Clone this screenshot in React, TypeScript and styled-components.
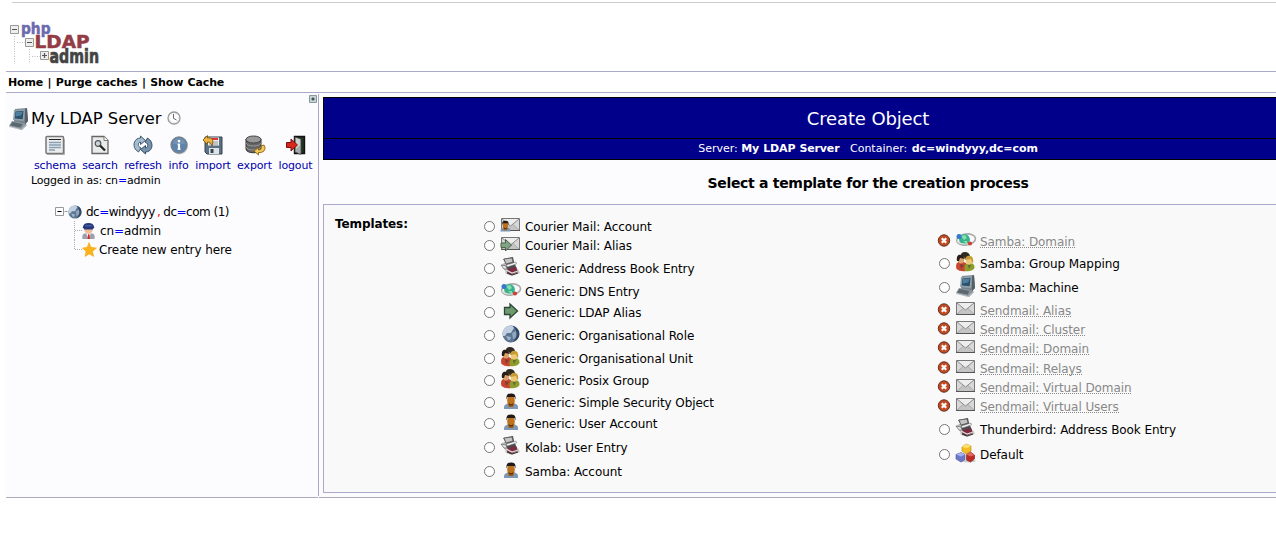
import React from 'react';
import styled, { createGlobalStyle } from 'styled-components';

const line = '#aaaacc';

const Global = createGlobalStyle`
  * { box-sizing: border-box; }
  html, body { margin: 0; background: #fff; overflow: hidden; }
  body { font: 12px/18px Verdana, "DejaVu Sans", sans-serif; color: #000; }
  svg { display: block; flex: none; overflow: visible; }
`;

const Page = styled.div`
  display: flex;
  flex-direction: column;
  width: 1413px;
  height: 548px;
  padding: 2px 0 0 6px;
`;
const Banner = styled.header`
  margin-left: 6px;
  height: 69px;
  border-top: 1px solid #ccc;
`;
const LogoArt = styled.svg`
  margin: 17px 0 0 -4px;
`;
const MenuBar = styled.nav`
  height: 22px;
  padding: 0 2px;
  border: solid ${line};
  border-width: 1px 0;
  font-size: 11px;
  font-weight: bold;
  line-height: 21px;
  letter-spacing: -0.16px;
  word-spacing: 0.8px;
  white-space: pre;
`;
const Columns = styled.div`
  display: flex;
  height: 405px;
`;
const Sidebar = styled.aside`
  display: flex;
  flex-direction: column;
  width: 312px;
  padding-top: 2px;
  background: #fcfcff;
  border-bottom: 1px solid #aaaabf;
`;
const Main = styled.main`
  flex: 1;
  padding: 4px 0 0 4px;
  background: #fcfcff;
  border-bottom: 1px solid #aaaabf;
`;
const Divider = styled.div`
  width: 1px;
  height: 402px;
  margin-top: 1px;
  background: ${line};
`;
const Expander = styled.div`
  display: flex;
  justify-content: flex-end;
  height: 9px;
  padding-right: 1px;
`;
const ServerTitle = styled.h2`
  display: flex;
  align-items: center;
  gap: 5px;
  height: 26px;
  margin: 2px 0 0 3px;
  font-size: 16.4px;
  font-weight: normal;
  white-space: nowrap;
  & > span { margin-left: -3px; }
  & > svg:last-child { margin-bottom: 2px; }
`;
const Tools = styled.div`
  display: flex;
  padding: 3px 0 0 28.5px;
`;
const Tool = styled.a<{ $w: number }>`
  display: flex;
  flex: none;
  flex-direction: column;
  align-items: center;
  gap: 2px;
  width: ${p => p.$w}px;
  padding-right: 7px;
  color: #0000aa;
  font-size: 11px;
  line-height: 18px;
  letter-spacing: -0.14px;
  white-space: nowrap;
`;
const LoggedIn = styled.div`
  padding-left: 25px;
  margin-top: -2px;
  font-size: 11px;
  line-height: 15px;
  letter-spacing: -0.2px;
`;
const Eq = styled.span`
  color: #00f;
`;
const Comma = styled.span`
  margin: 0 3px 0 2px;
  color: #f00;
`;
const Tree = styled.div`
  padding: 14px 0 0 49px;
`;
const TreeRow = styled.div<{ $gap: number; $tight?: boolean }>`
  display: flex;
  align-items: center;
  height: 19px;
  letter-spacing: ${p => (p.$tight ? '-0.5px' : '-0.1px')};
  white-space: nowrap;
  & > span { margin-left: ${p => p.$gap}px; }
`;
const Nested = styled.div`
  padding-left: 19px;
`;
const TitleBar = styled.div`
  border: 1px solid #000;
  background: #00008b;
  color: #fff;
  text-align: center;
`;
const Title = styled.h1`
  height: 41px;
  margin: 0;
  border-bottom: 1px solid #000;
  font-size: 18px;
  font-weight: normal;
  line-height: 41px;
  letter-spacing: -0.12px;
`;
const Subtitle = styled.div`
  height: 20px;
  font-size: 11px;
  line-height: 20px;
  white-space: pre;
  b { letter-spacing: -0.14px; word-spacing: 0.4px; }
  b:last-child { margin-left: 1px; letter-spacing: -0.07px; }
`;
const Prompt = styled.h3`
  height: 44px;
  margin: 0;
  font-size: 14px;
  line-height: 46px;
  letter-spacing: -0.3px;
  text-align: center;
`;
const Panel = styled.section`
  display: grid;
  grid-template-columns: 148px 455px 1fr;
  height: 289px;
  padding-left: 11px;
  border: 1px solid ${line};
  background: #f9f9f9;
`;
const PanelLabel = styled.b`
  padding-top: 10px;
  letter-spacing: -0.1px;
`;
const List = styled.div<{ $top: number }>`
  padding-top: ${p => p.$top}px;
`;
const Row = styled.label<{ $step: number }>`
  display: flex;
  align-items: center;
  height: 18px;
  margin-bottom: ${p => p.$step - 18}px;
  white-space: nowrap;
`;
const Radio = styled.input.attrs({ type: 'radio', name: 'template' })`
  appearance: none;
  flex: none;
  width: 11px;
  height: 11px;
  margin: 0 0 1px 1px;
  border: 1px solid #767676;
  border-radius: 50%;
  background: #fff;
`;
const Blocked = styled.svg`
  margin-bottom: 3px;
`;
const IconCell = styled.span`
  display: flex;
  align-items: center;
  justify-content: center;
  width: 22px;
  height: 22px;
  margin: 0 3px 4px 5px;
`;
const Name = styled.span<{ $off?: boolean }>`
  letter-spacing: -0.08px;
  ${p => p.$off && `
    height: 11px;
    margin-top: 1px;
    border-bottom: 1px dotted #888;
    color: #888;
    line-height: 10px;
  `}
`;

const Logo = () => (
  <LogoArt width="96" height="46" viewBox="8 20 96 46">
    <g stroke="#bbb" strokeDasharray="1 1.500" fill="none">
      <path d="M14.500 36V64M29.500 49V64M17 42.500H25M32 56.500H40" />
    </g>
    <g fill="#eee" stroke="#999">
      <path d="M10.500 25.500h8v8h-8zM25.500 38.500h8v8h-8zM40.500 51.500h8v8h-8z" />
      <path d="M12 29.500h5M27 42.500h5M42 55.500h5M44.500 53v5" stroke="#555" strokeWidth="1.200" />
    </g>
    <g fontFamily='"DejaVu Sans", sans-serif' fontWeight="bold">
      <text x="21" y="33.500" fontSize="15.500" fill="#6b6bad" stroke="#6b6bad" strokeWidth=".5" textLength="29.500" lengthAdjust="spacingAndGlyphs">php</text>
      <text x="34.500" y="48" fontSize="17.500" fill="#943c45" stroke="#943c45" strokeWidth=".5" textLength="55" lengthAdjust="spacingAndGlyphs">LDAP</text>
      <text x="49.500" y="63" fontSize="19" fill="#444" stroke="#444" strokeWidth=".7" textLength="49.500" lengthAdjust="spacingAndGlyphs">admin</text>
    </g>
  </LogoArt>
);

const Computer = () => (
  <svg width="20" height="22" viewBox="0 0 20 22">
    <path d="M6 1L18 0 19 13 15 18 5 14z" fill="#77838b" />
    <path d="M16 1l2-1 1 13-3 3z" fill="#555f66" />
    <path d="M5 2l11-1-1 12-11-1z" fill="#93a3ac" />
    <path d="M6.500 3.500l8-.7-.8 8.500-8-.8z" fill="#2c506d" />
    <path d="M7 4l7-.6-2 4-5.500 1z" fill="#4f7f9f" />
    <path d="M3 13l12 2 3 2-5 5L0 18z" fill="#8c969c" />
    <path d="M3.500 14l10 2-2 3.500L1 17.500z" fill="#5b6870" />
    <path d="M0 18l12 3 5-4v1l-5 4-12-3z" fill="#bcc3c7" />
  </svg>
);
const Clock = () => (
  <svg width="14" height="14" viewBox="0 0 14 14" fill="none">
    <circle cx="7" cy="7" r="6" fill="#fff" stroke="#999" strokeWidth="1.300" />
    <circle cx="7" cy="7" r="4.700" stroke="#ccc" strokeWidth=".8" strokeDasharray="1 1.300" />
    <path d="M6.500 3v4.300L9.500 9" stroke="#666" />
  </svg>
);
const Schema = () => (
  <svg width="20" height="20" viewBox="0 0 20 20">
    <rect x="1" y="1.500" width="17.500" height="17" rx="1" fill="#ececec" stroke="#777" strokeWidth="1.500" />
    <path d="M2 19.500h17.500V4" stroke="#aaa" fill="none" />
    <path d="M4 4.500h12" stroke="#222" />
    <path d="M4 7.500h12M4 10h12M4 12.500h12M4 15h6" stroke="#86a0b4" strokeWidth="1.300" />
  </svg>
);
const Search = () => (
  <svg width="18" height="20" viewBox="0 0 18 20">
    <path d="M1 1.500h12l4 4v13H1z" fill="#e9eaea" stroke="#666" strokeWidth="1.300" />
    <path d="M13 1.500v4h4" fill="#fff" stroke="#777" />
    <circle cx="7" cy="8.500" r="2.800" fill="#c8d5dc" stroke="#555" strokeWidth="1.200" />
    <path d="M9 10.500l5 5" stroke="#222" strokeWidth="2.300" />
  </svg>
);
const Refresh = () => (
  <svg width="20" height="20" viewBox="0 0 20 20" strokeLinejoin="round">
    <path d="M2.500 14.500C-1 9 2 3 7.500 3V1l5 4.500-5 4V7C5 7.500 4.500 10.500 6.500 12l1.500 1-2.500 4z" fill="#a5bdd0" stroke="#344c60" strokeWidth=".9" />
    <path d="M17.500 5.500c3.500 5.500.5 11.500-5 11.500v2l-5-4.500 5-4V13c2.500-.5 3-3.500 1-5l-1.500-1 2.500-4z" fill="#7593ad" stroke="#2d4356" strokeWidth=".9" />
  </svg>
);
const Info = () => (
  <svg width="20" height="20" viewBox="0 0 20 20">
    <circle cx="10.500" cy="11" r="8.500" fill="#ccc" />
    <circle cx="10" cy="10" r="8" fill="#5f83aa" stroke="#77838f" strokeWidth="1.300" />
    <path d="M4 9a6 6 0 0112 0z" fill="#86a2c0" opacity=".5" />
    <path d="M10 5v2.300M10 8.800V14.500" stroke="#fff" strokeWidth="2.200" fill="none" />
    <path d="M8.500 9.300H10M8.500 14.200h3.200" stroke="#fff" />
  </svg>
);
const Import = () => (
  <svg width="20" height="20" viewBox="0 0 20 20">
    <path d="M2 2h17v17H4l-2-2z" fill="#5d7185" stroke="#37424c" />
    <path d="M5 2.500h11v8H5z" fill="#eee" />
    <path d="M6 4h9" stroke="#d33" strokeWidth="2" />
    <path d="M6 7h9M6 9h9" stroke="#999" />
    <path d="M6 13h10v6H6z" fill="#dde3e7" />
    <path d="M7.500 14h3v4h-3z" fill="#384651" />
    <path d="M0 5l4.500-4.500V3C9 2 11 5 9 11 8 8 7 7 4.500 7v2.500z" fill="#eab544" stroke="#82540c" strokeWidth=".9" />
  </svg>
);
const Export = () => (
  <svg width="22" height="20" viewBox="0 0 22 20">
    <path d="M2 4v10c0 5 15 5 15 0V4z" fill="#646464" stroke="#333" />
    <path d="M2 8c1 4 14 4 15 0M2 12c1 4 14 4 15 0" stroke="#999" fill="none" />
    <ellipse cx="9.500" cy="4.500" rx="7.500" ry="3.500" fill="#999" stroke="#444" />
    <path d="M20 10c3 5-1 8-5.500 7.500V20L10 16l4.500-3.500V15c2.500 0 3.500-2 2.500-4z" fill="#f2c75b" stroke="#89600f" strokeWidth=".9" />
  </svg>
);
const Logout = () => (
  <svg width="20" height="20" viewBox="0 0 20 20">
    <path d="M8.500 1.500h10v17h-10z" fill="#223126" stroke="#111" strokeWidth="1.400" />
    <path d="M9 2l6 2v15.500L9 17z" fill="#a4aaa6" stroke="#444" strokeWidth=".7" />
    <path d="M10 3l4 1.500v6L10 14z" fill="#dfe3e0" opacity=".7" />
    <path d="M.5 7.500H5V4l6.500 6L5 16v-3.500H.5z" fill="#d9261b" stroke="#711" />
  </svg>
);
const Globe = ({ size = 18 }: { size?: number }) => (
  <svg width={size} height={size} viewBox="0 0 18 18">
    <circle cx="9" cy="9" r="8.500" fill="#5b7593" />
    <path d="M3 3C6 0 11 0 12 3L10 6 9 8 5 8 3 11 1 11C0 7 1 5 3 3z" fill="#c0d0e0" />
    <path d="M10 8l4-2 2 3-2 4-3 1z" fill="#8fa7c0" />
    <path d="M11 1c8 2 9 13 0 16 4-4 5-11 0-16z" fill="#1d2e44" opacity=".65" />
    <path d="M4 11l5 1-1 3-2 0z" fill="#9db4c9" />
  </svg>
);
const Minus = () => (
  <svg width="13" height="19" viewBox="0 0 13 19" fill="none">
    <path d="M.5 5.500h8v8h-8zM9.500 9.500h3" stroke="#999" />
    <path d="M2.500 9.500h4" stroke="#000" />
  </svg>
);
const Branch = ({ last = false }: { last?: boolean }) => (
  <svg width="8" height="19" viewBox="0 0 8 19">
    <path d={last ? 'M.5 0V10M1 9.500H8' : 'M.5 0V19M1 9.500H8'} stroke="#aaa" strokeDasharray="1 1" fill="none" />
  </svg>
);
const Admin = () => (
  <svg width="13" height="16" viewBox="0 0 13 17">
    <path d="M0 17v-3c0-2 2-3 4-3h5c2 0 4 1 4 3v3z" fill="#9aa2ad" />
    <path d="M4 11l2.500 6L9 11z" fill="#fff" />
    <path d="M6 12h1.500l.5 5H5.500z" fill="#d22" />
    <circle cx="6.500" cy="7" r="4.500" fill="#f0bd98" />
    <path d="M.5 4.500Q1 0 6.500 0T12.500 4.500L11 7H2z" fill="#26397a" />
    <path d="M3 3h7" stroke="#5671b8" />
  </svg>
);
const Star = () => (
  <svg width="15" height="15" viewBox="0 0 15 15">
    <path d="M7 .5l2 4.800 5.500.7-4 3.500 1.200 5L7.300 12 3 14.500l1-5L.5 6l4.700-.7z" fill="#fbb31b" stroke="#f3a00a" strokeWidth=".5" />
  </svg>
);
const PlusBox = () => (
  <svg width="8" height="8" viewBox="0 0 8 8">
    <path d="M.5.5h7v7h-7z" fill="#c5d3d3" stroke="#899" />
    <path d="M2.500 4h3M4 2.500v3" stroke="#345" strokeWidth="1.300" />
  </svg>
);
const Envelope = () => (
  <g>
    <path d="M1.500 3.500h18v12h-18z" fill="#d8d8d8" stroke="#777" />
    <path d="M2 15l6-5.500h5l6 5.500" fill="#c4c4c4" stroke="#aaa" />
    <path d="M2 4l8.500 7L19 4" fill="#ededed" stroke="#8a8a8a" />
    <path d="M1 15.500h19" stroke="#555" />
  </g>
);
const Person = () => (
  <g>
    <path d="M0 16.500v-1.500c0-3 3-4 5-4h4c3 0 5 1 5 4v1.500z" fill="#7e97b4" />
    <path d="M3.500 11h7L9 14.500H5z" fill="#9f5c18" />
    <ellipse cx="7" cy="8" rx="3.800" ry="5.500" fill="#bd721f" />
    <path d="M2.500 7C2 2 4 1 7 1s5 1 4.500 6l-1-2.500h-7z" fill="#241a13" />
    <path d="M4.500 10q2.500 4 5 0l-1 3H5.500z" fill="#41230c" />
  </g>
);

type Kind = 'mailUser' | 'mailAlias' | 'book' | 'dns' | 'arrow' | 'globe' | 'group' | 'user' | 'pc' | 'mail' | 'cubes';

const Glyph = ({ kind }: { kind: Kind }) => {
  if (kind === 'globe') return <Globe />;
  if (kind === 'pc') return <Computer />;
  return (
    <svg width="22" height="20" viewBox="0 0 22 20">
      {(kind === 'mail' || kind === 'mailUser' || kind === 'mailAlias') && <Envelope />}
      {kind === 'mailUser' && <g transform="translate(.5 5) scale(.7)"><Person /></g>}
      {kind === 'mailAlias' && <path d="M1 9H5.500V5.500l6 5.500-6 6v-3.500H1z" fill="#83a385" stroke="#4a624c" />}
      {kind === 'user' && <g transform="translate(4 1.500)"><Person /></g>}
      {kind === 'arrow' && <path d="M4.500 6.500H10V3l7.500 7-7.500 7v-3.500H4.500z" fill="#6d9a6f" stroke="#2c4832" strokeWidth="1.300" />}
      {kind === 'book' && (
        <g>
          <path d="M5 15l13-3 2 4-8 3-6-2z" fill="#999" opacity=".5" />
          <path d="M1 8l5-3 3 10-3 0z" fill="#b5b5b5" />
          <path d="M1 8l5 1 1 3-3 0z" fill="#e9e9e9" stroke="#666" strokeWidth=".7" />
          <path d="M3 2l10-2 1 5 3 7-9 3-2-8z" fill="#4b4c50" />
          <path d="M4 2l8-1 1 4-7 2z" fill="#c3c5c6" stroke="#555" strokeWidth=".7" />
          <path d="M6 8l10-3 .5 2L7.500 10z" fill="#f2f2f2" stroke="#666" strokeWidth=".5" />
          <path d="M8 12l8-2 2 5-7 3-4-2z" fill="#7c2c3f" />
          <path d="M6 13l6 3 6-2" fill="none" stroke="#ddd" strokeWidth="1.200" />
          <path d="M7 16l5 2 6-2" fill="none" stroke="#333" />
        </g>
      )}
      {kind === 'dns' && (
        <g>
          <ellipse cx="11" cy="9.500" rx="9.500" ry="5.500" fill="none" stroke="#aaa" strokeWidth="1.600" transform="rotate(-8 11 9)" />
          <circle cx="9.500" cy="9.500" r="5.400" fill="#37b28d" />
          <path d="M6 6l4-1 2 3-3 2zM8 11l4 0 0 3z" fill="#86e0ae" />
          <path d="M2 11q5 5 14 2" fill="none" stroke="#ddd" strokeWidth="1.300" />
          <circle cx="4" cy="6.500" r="2.500" fill="#3578cd" />
          <circle cx="15" cy="13.500" r="2.100" fill="#d33c31" />
        </g>
      )}
      {kind === 'group' && (
        <g>
          <path d="M1.500 17q-2-7 4.500-8l5 2v8q-6 1-9.500-2z" fill="#c94531" />
          <path d="M10 19q-2-8 4-8 6 0 5.500 5-3 4-9.500 3z" fill="#8e9c2c" />
          <ellipse cx="6" cy="7.500" rx="3.200" ry="4" fill="#dba36b" />
          <ellipse cx="14" cy="8.500" rx="3.200" ry="4" fill="#edc877" />
          <path d="M2 9C1 3 4 2 7 3l3 4-5-1-1 3z" fill="#281c17" />
          <path d="M6 3q0-3 4-3t5 4l-4 3z" fill="#302a20" />
          <path d="M10 8q1-5 5-4 4 0 3 8l-2-5z" fill="#c79a32" />
          <path d="M5 12l1 5 3-4M13 13l1 4 2-4" fill="#333" opacity=".5" />
        </g>
      )}
      {kind === 'cubes' && (
        <g strokeWidth=".6">
          <ellipse cx="13" cy="18" rx="8" ry="1.500" fill="#ccc" />
          <path d="M7 4l4-3 5 2v5l-5 3-4-3z" fill="#f4bd22" stroke="#bd850d" />
          <path d="M7 4l4-3 5 2-4 2z" fill="#ffe275" />
          <path d="M1 11.500l5-2 4 2v5l-4 2.500-5-3z" fill="#6c78c8" stroke="#4a559b" />
          <path d="M1 11.500l5-2 4 2-4 2z" fill="#a6b0ed" />
          <path d="M11.500 11.500l4-2.500 4 3v4l-4 3-4-2z" fill="#ba2c24" stroke="#861b17" />
          <path d="M11.500 11.500l4-2.500 4 3-4 1.500z" fill="#e46858" />
        </g>
      )}
    </svg>
  );
};
const ErrorMark = () => (
  <Blocked width="12" height="13" viewBox="0 0 12 13">
    <circle cx="6" cy="6.500" r="5.700" fill="#c34a20" stroke="#5f3020" />
    <path d="M3.800 4.300l4.400 4.400M8.200 4.300L3.800 8.700" stroke="#fff" strokeWidth="2.200" />
  </Blocked>
);

type Entry = { name: string; icon: Kind; step: number; off?: boolean };
const left: Entry[] = [
  { name: 'Courier Mail: Account', icon: 'mailUser', step: 19 },
  { name: 'Courier Mail: Alias', icon: 'mailAlias', step: 23 },
  { name: 'Generic: Address Book Entry', icon: 'book', step: 23 },
  { name: 'Generic: DNS Entry', icon: 'dns', step: 21 },
  { name: 'Generic: LDAP Alias', icon: 'arrow', step: 23 },
  { name: 'Generic: Organisational Role', icon: 'globe', step: 23 },
  { name: 'Generic: Organisational Unit', icon: 'group', step: 22 },
  { name: 'Generic: Posix Group', icon: 'group', step: 22 },
  { name: 'Generic: Simple Security Object', icon: 'user', step: 21 },
  { name: 'Generic: User Account', icon: 'user', step: 24 },
  { name: 'Kolab: User Entry', icon: 'book', step: 24 },
  { name: 'Samba: Account', icon: 'user', step: 18 },
];
const right: Entry[] = [
  { name: 'Samba: Domain', icon: 'dns', step: 22, off: true },
  { name: 'Samba: Group Mapping', icon: 'group', step: 24 },
  { name: 'Samba: Machine', icon: 'pc', step: 23 },
  { name: 'Sendmail: Alias', icon: 'mail', step: 19, off: true },
  { name: 'Sendmail: Cluster', icon: 'mail', step: 19, off: true },
  { name: 'Sendmail: Domain', icon: 'mail', step: 20, off: true },
  { name: 'Sendmail: Relays', icon: 'mail', step: 19, off: true },
  { name: 'Sendmail: Virtual Domain', icon: 'mail', step: 19, off: true },
  { name: 'Sendmail: Virtual Users', icon: 'mail', step: 23, off: true },
  { name: 'Thunderbird: Address Book Entry', icon: 'book', step: 25 },
  { name: 'Default', icon: 'cubes', step: 18 },
];
const tools = [
  { name: 'schema', w: 48, Icon: Schema },
  { name: 'search', w: 42, Icon: Search },
  { name: 'refresh', w: 44, Icon: Refresh },
  { name: 'info', w: 27, Icon: Info },
  { name: 'import', w: 42, Icon: Import },
  { name: 'export', w: 41, Icon: Export },
  { name: 'logout', w: 41, Icon: Logout },
];

const TemplateList = ({ items, top }: { items: Entry[]; top: number }) => (
  <List $top={top}>
    {items.map(e => (
      <Row key={e.name} $step={e.step}>
        {e.off ? <ErrorMark /> : <Radio />}
        <IconCell><Glyph kind={e.icon} /></IconCell>
        <Name $off={e.off}>{e.name}</Name>
      </Row>
    ))}
  </List>
);

export default function App() {
  return (
    <Page>
      <Global />
      <Banner><Logo /></Banner>
      <MenuBar>Home | Purge caches | Show Cache</MenuBar>
      <Columns>
        <Sidebar>
          <Expander><PlusBox /></Expander>
          <ServerTitle><Computer /><span>My LDAP Server</span><Clock /></ServerTitle>
          <Tools>
            {tools.map(({ name, w, Icon }) => <Tool key={name} $w={w}><Icon />{name}</Tool>)}
          </Tools>
          <LoggedIn>Logged in as: cn<Eq>=</Eq>admin</LoggedIn>
          <Tree>
            <TreeRow $gap={4} $tight>
              <Minus />
              <Globe size={14} />
              <span>dc<Eq>=</Eq>windyyy<Comma>,</Comma>dc<Eq>=</Eq>com (1)</span>
            </TreeRow>
            <Nested>
              <TreeRow $gap={5}><Branch /><Admin /><span>cn<Eq>=</Eq>admin</span></TreeRow>
              <TreeRow $gap={2}><Branch last /><Star /><span>Create new entry here</span></TreeRow>
            </Nested>
          </Tree>
        </Sidebar>
        <Divider />
        <Main>
          <TitleBar>
            <Title>Create Object</Title>
            <Subtitle>Server: <b>My LDAP Server</b>{'   '}Container: <b>dc=windyyy,dc=com</b></Subtitle>
          </TitleBar>
          <Prompt>Select a template for the creation process</Prompt>
          <Panel>
            <PanelLabel>Templates:</PanelLabel>
            <TemplateList items={left} top={13} />
            <TemplateList items={right} top={28} />
          </Panel>
        </Main>
      </Columns>
    </Page>
  );
}
